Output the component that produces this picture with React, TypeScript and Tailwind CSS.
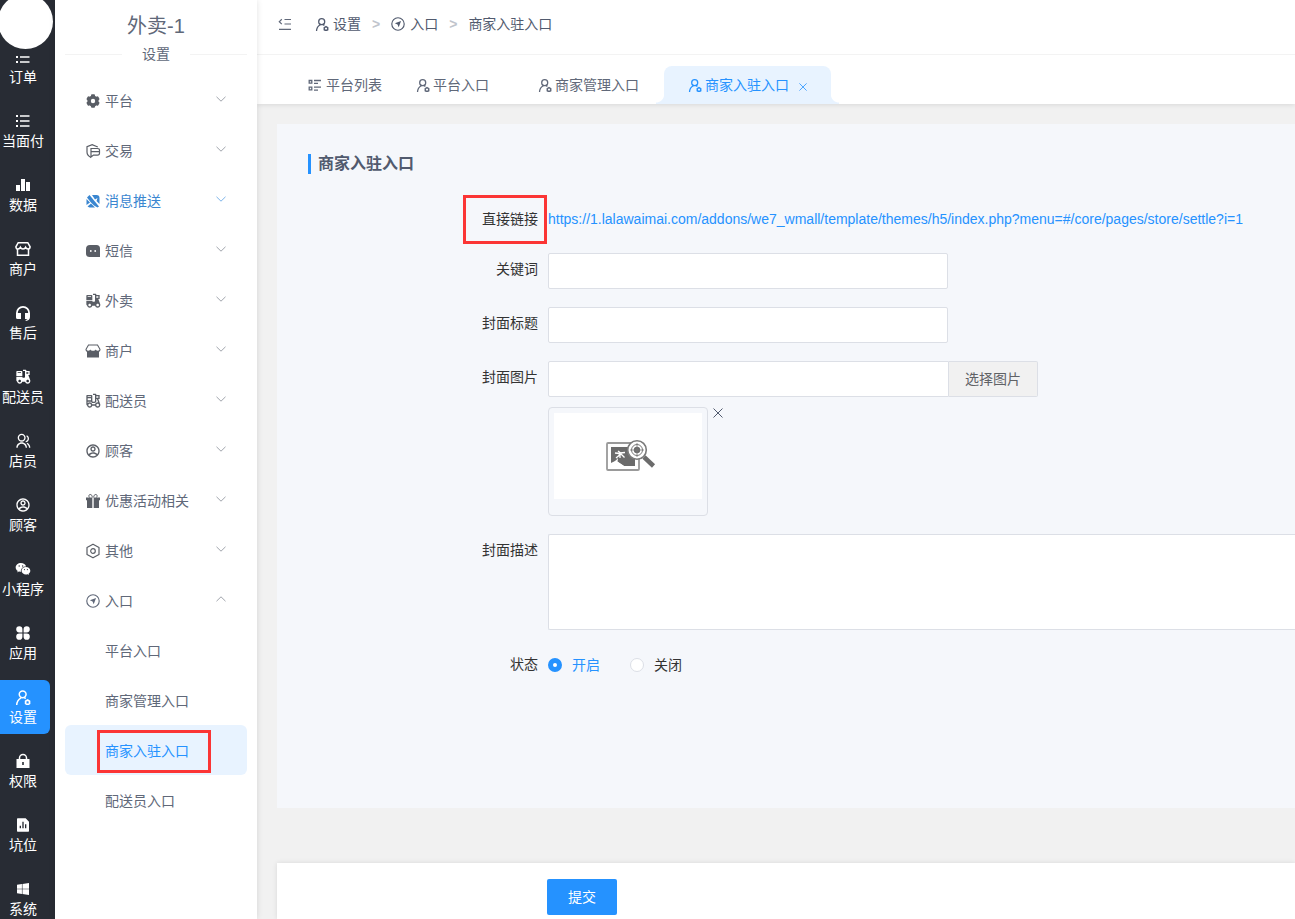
import { useState } from "react";
import type { ReactNode } from "react";
import {
  RiAccountCircleLine,
  RiFileChartFill,
  RiGroupLine,
  RiTakeawayFill,
  RiTakeawayLine,
  RiWechatFill,
  RiWindowsFill,
} from "react-icons/ri";

type IconProps = {
  className?: string;
};

const ListIcon = ({ className }: IconProps) => (
  <svg viewBox="0 0 16 16" className={className} fill="currentColor">
    <path d="M1 2h2v2H1zM5 2.300h9.500v1.500H5zM1 7h2v2H1zM5 7.300h9.500v1.500H5zM1 12h2v2H1zM5 12.300h9.500v1.500H5z" />
  </svg>
);

const BarsIcon = ({ className }: IconProps) => (
  <svg viewBox="0 0 16 16" className={className} fill="currentColor">
    <path d="M1 8h4v6H1zM6 2h4v12H6zM11 5h4v9h-4z" />
  </svg>
);

const ShopIcon = ({ className }: IconProps) => (
  <svg
    viewBox="0 0 16 16"
    className={className}
    fill="none"
    stroke="currentColor"
    strokeWidth="1.500"
  >
    <path d="M3.200 1.700h9.600l2.300 4.100c0 1.300-.8 2.200-2 2.200S11 7.400 10.600 6.400C10.200 7.400 9.200 8 8 8s-2.200-.6-2.600-1.600C5 7.400 4 8 2.900 8S.9 7.100.9 5.800z" />
    <path d="M2.500 8v6.300h11V8" />
  </svg>
);

const ShopFillIcon = ({ className }: IconProps) => (
  <svg viewBox="0 0 16 16" className={className}>
    <path
      d="M3.500 2h9L15 6.300c0 1.200-.8 2-2 2H3c-1.200 0-2-.8-2-2z"
      fill="none"
      stroke="currentColor"
      strokeWidth="1.100"
    />
    <path
      d="M2 8c1.600 0 2.800-.5 3.300-1.600C5.900 7.500 6.900 8 8 8s2.100-.5 2.700-1.600C11.200 7.500 12.400 8 14 8v6.500H2z"
      fill="currentColor"
    />
  </svg>
);

const HeadsetIcon = ({ className }: IconProps) => (
  <svg viewBox="0 0 16 16" className={className} fill="currentColor">
    <path d="M8 1a7 7 0 0 0-7 7v4.500A1.500 1.500 0 0 0 2.500 14H6V8H2.800a5.200 5.200 0 0 1 10.400 0H10v6h2.500l-.5.600-1.500.4.400 1C13.500 15.600 15 14.300 15 12V8a7 7 0 0 0-7-7z" />
  </svg>
);

const CloverIcon = ({ className }: IconProps) => (
  <svg viewBox="0 0 16 16" className={className} fill="currentColor">
    <path d="M4.300 1.200a3.100 3.100 0 0 1 3.100 3.100v3.100H4.300a3.100 3.100 0 0 1 0-6.200zM11.700 1.200a3.100 3.100 0 0 1 0 6.200H8.600V4.300a3.100 3.100 0 0 1 3.100-3.100zM4.300 8.600h3.100v3.100a3.100 3.100 0 1 1-3.100-3.100zM8.600 8.600h3.100a3.100 3.100 0 1 1-3.100 3.100z" />
  </svg>
);

const LockIcon = ({ className }: IconProps) => (
  <svg viewBox="0 0 16 16" className={className} fill="currentColor">
    <path
      fillRule="evenodd"
      d="M1.500 6h13v9h-13zM7.200 9v3h1.600V9z"
    />
    <path
      d="M4.500 6.500V5a3.500 3.500 0 0 1 7 0v1.500"
      fill="none"
      stroke="currentColor"
      strokeWidth="1.500"
    />
  </svg>
);

const UserCogIcon = ({ className }: IconProps) => (
  <svg
    viewBox="0 0 14 14"
    className={className}
    fill="none"
    stroke="currentColor"
    strokeWidth="1.300"
  >
    <circle cx="6.700" cy="4.700" r="3" />
    <path d="M1.500 14c.1-3 1.400-5 3.800-6.300M8.200 7.600l1.200.8" />
    <path
      d="M11 9.700l1.700 1v2l-1.700 1-1.700-1v-2z"
      strokeWidth="1.500"
    />
  </svg>
);

const EntryIcon = ({ className }: IconProps) => (
  <svg viewBox="0 0 16 16" className={className}>
    <circle
      cx="8"
      cy="8"
      r="7.100"
      fill="none"
      stroke="currentColor"
      strokeWidth="1.300"
    />
    <path d="M11.500 4.500 8.800 11.600 7.500 8.500 4.400 7.200z" fill="currentColor" />
  </svg>
);

const GearIcon = ({ className }: IconProps) => (
  <svg viewBox="0 0 16 16" className={className} fill="currentColor">
    <circle cx="8" cy="8" r="5.600" />
    <rect x="6" y="1.300" width="4" height="13.400" rx="1" />
    <rect
      x="6"
      y="1.300"
      width="4"
      height="13.400"
      rx="1"
      transform="rotate(60 8 8)"
    />
    <rect
      x="6"
      y="1.300"
      width="4"
      height="13.400"
      rx="1"
      transform="rotate(120 8 8)"
    />
    <circle cx="8" cy="8" r="2.200" fill="white" />
  </svg>
);

const NutIcon = ({ className }: IconProps) => (
  <svg
    viewBox="0 0 16 16"
    className={className}
    fill="none"
    stroke="currentColor"
    strokeWidth="1.200"
  >
    <path d="M8 1.200l6 3.400v6.800l-6 3.400-6-3.400V4.600z" strokeLinejoin="round" />
    <circle cx="8" cy="8" r="2.300" />
  </svg>
);

const ShieldIcon = ({ className }: IconProps) => (
  <svg
    viewBox="0 0 16 16"
    className={className}
    fill="none"
    stroke="currentColor"
    strokeWidth="1.200"
  >
    <path d="M12.800 4 7.200 1.700 2 3.700V9c0 2.600 1.500 4.300 4 5.400" />
    <path d="M6 5.500h6.500c1.200 0 2 .7 2 1.800v3c0 1.100-.8 1.800-2 1.800H8.500L6 14zM6 8.700h8.500" />
  </svg>
);

const PushIcon = ({ className }: IconProps) => (
  <svg viewBox="0 0 16 16" className={className}>
    <path
      d="M2 4.500 4.500 2 14 13.500 12.500 14.500 9 12.500 5.500 9z"
      fill="currentColor"
    />
    <path d="M7 2h4.500A3 3 0 0 1 14.500 5v6L11.500 8l1-3-2.500 1.500z" fill="currentColor" />
    <path d="M1.500 6 5 9.500 1.500 12zM2.500 13.500 6 10.500l4 4H4.500z" fill="currentColor" />
  </svg>
);

const SmsIcon = ({ className }: IconProps) => (
  <svg viewBox="0 0 16 16" className={className}>
    <path
      d="M5 2h6.500A3.500 3.500 0 0 1 15 5.500V14H4.500A3.500 3.500 0 0 1 1 10.500V6a4 4 0 0 1 4-4z"
      fill="currentColor"
    />
    <circle cx="5.800" cy="8" r=".9" fill="white" />
    <circle cx="10.200" cy="8" r=".9" fill="white" />
  </svg>
);

const GiftIcon = ({ className }: IconProps) => (
  <svg viewBox="0 0 16 16" className={className} fill="currentColor">
    <path d="M1 4.500h6.300v2.800H1zM8.700 4.500H15v2.800H8.700zM2 7.300h5.300V15H2zM8.700 7.300H14V15H8.700z" />
    <path
      d="M7.300 4.500C7.300 2.500 6.500 1.500 5.200 1.500S3.400 3 4.500 4.500M8.700 4.500c0-2 .8-3 2.100-3S12.600 3 11.500 4.500"
      fill="none"
      stroke="currentColor"
    />
  </svg>
);

const GridListIcon = ({ className }: IconProps) => (
  <svg
    viewBox="0 0 14 14"
    className={className}
    fill="none"
    stroke="currentColor"
    strokeWidth="1.300"
  >
    <path d="M1.200 2.500h2.600v2.600H1.200zM1.200 9.200h2.600v2.600H1.200zM6 2.500h7M6 5.400h4M6 9.200h7M6 12.200h4" />
  </svg>
);

const CollapseIcon = ({ className }: IconProps) => (
  <svg
    viewBox="0 0 14 14"
    className={className}
    fill="none"
    stroke="currentColor"
    strokeWidth="1.200"
  >
    <path d="M6.500 2.500H13M6.500 7H13M1 12.400h12M3.800 2.300 1.300 4.700l2.500 2.400" />
  </svg>
);

const CloseIcon = ({ className }: IconProps) => (
  <svg
    viewBox="0 0 10 10"
    className={className}
    fill="none"
    stroke="currentColor"
  >
    <path d="M.5.500l9 9M9.500.500l-9 9" />
  </svg>
);

const ChevronIcon = ({ className }: IconProps) => (
  <svg
    viewBox="0 0 10 10"
    className={className}
    fill="none"
    stroke="currentColor"
  >
    <path d="M.5 2.800 5 7.200l4.500-4.400" />
  </svg>
);

const PlaceholderPicture = ({ className }: IconProps) => (
  <svg viewBox="0 0 50 34" className={className}>
    <rect
      x="1"
      y="4"
      width="32"
      height="27"
      rx="1"
      fill="white"
      stroke="#9a9a9a"
      strokeWidth="1.800"
    />
    <path d="M5 8h24v19H18l-6-4-7 1z" fill="#6b6b6b" />
    <path
      d="M14 13.500l-1 3-3 2.500M14 14.500l-5-.5M14 14l5-.5M14.500 14.500l4 4M14 14v5M12 12l4 3"
      fill="none"
      stroke="white"
      strokeWidth="1.300"
    />
    <path d="M5 27v-3c2-1 5-2 7-5 0 2-1 3 0 4l6 4z" fill="white" />
    <path d="m38 18 9.500 9" stroke="#6b6b6b" strokeWidth="4.500" />
    <circle
      cx="31"
      cy="11"
      r="9.300"
      fill="white"
      stroke="#7a7a7a"
      strokeWidth="1.600"
    />
    <circle cx="31" cy="11" r="5.500" fill="none" stroke="#7a7a7a" />
    <circle cx="31" cy="11" r="3.200" fill="#6b6b6b" />
    <path d="M31 4v14M24 11h14" stroke="#7a7a7a" strokeWidth=".8" />
  </svg>
);

type NavEntry = {
  label: string;
  Icon: (props: IconProps) => ReactNode;
  hot?: boolean;
};

const railItems: NavEntry[] = [
  { label: "订单", Icon: ListIcon },
  { label: "当面付", Icon: ListIcon },
  { label: "数据", Icon: BarsIcon },
  { label: "商户", Icon: ShopIcon },
  { label: "售后", Icon: HeadsetIcon },
  { label: "配送员", Icon: RiTakeawayFill },
  { label: "店员", Icon: RiGroupLine },
  { label: "顾客", Icon: RiAccountCircleLine },
  { label: "小程序", Icon: RiWechatFill },
  { label: "应用", Icon: CloverIcon },
  { label: "设置", Icon: UserCogIcon },
  { label: "权限", Icon: LockIcon },
  { label: "坑位", Icon: RiFileChartFill },
  { label: "系统", Icon: RiWindowsFill },
];

const menuItems: NavEntry[] = [
  { label: "平台", Icon: GearIcon },
  { label: "交易", Icon: ShieldIcon },
  { label: "消息推送", Icon: PushIcon, hot: true },
  { label: "短信", Icon: SmsIcon },
  { label: "外卖", Icon: RiTakeawayFill },
  { label: "商户", Icon: ShopFillIcon },
  { label: "配送员", Icon: RiTakeawayLine },
  { label: "顾客", Icon: RiAccountCircleLine },
  { label: "优惠活动相关", Icon: GiftIcon },
  { label: "其他", Icon: NutIcon },
];

const entryLinks = ["平台入口", "商家管理入口", "商家入驻入口", "配送员入口"];

const Rail = () => {
  return (
    <nav className="w-[55px] shrink-0 bg-[#282c34] text-white">
      <div className="relative z-10 -mb-[14px] h-[54px] bg-[#282c34]">
        <div className="absolute -left-0.5 -top-1.5 size-[55px] rounded-full bg-white" />
      </div>
      <ul className="flex flex-col gap-2.5">
        {railItems.map(({ label, Icon }) => (
          <li key={label}>
            <a
              href="#"
              className={`flex h-[54px] w-[50px] flex-col items-center rounded-r-md pr-1 pt-[9px] ${
                label === "设置" ? "bg-[#2592ff]" : ""
              }`}
            >
              <Icon className="size-4 shrink-0" />
              <span className="whitespace-nowrap leading-6">{label}</span>
            </a>
          </li>
        ))}
      </ul>
    </nav>
  );
};

const Sidebar = () => {
  return (
    <aside className="z-10 w-[202px] shrink-0 bg-white px-2.5 shadow-[0_0_6px_rgba(0,0,0,0.12)]">
      <h1 className="pt-2.5 text-center text-xl leading-8">外卖-1</h1>
      <div className="flex items-center gap-5 leading-6">
        <span className="h-px flex-1 bg-[#f3f3f3]" />
        <span>设置</span>
        <span className="h-px flex-1 bg-[#f3f3f3]" />
      </div>
      <ul className="pt-[9px]">
        {menuItems.map(({ label, Icon, hot }) => (
          <li key={label}>
            <button
              type="button"
              className={`flex h-[50px] w-full items-center gap-1 pl-5 pr-[21px] pt-0.5 ${
                hot ? "text-[#3a86d0]" : ""
              }`}
            >
              <Icon className={`size-4 ${hot ? "" : "text-[#5a5e66]"}`} />
              <span>{label}</span>
              <ChevronIcon
                className={`mb-1 ml-auto size-2.5 ${
                  hot ? "text-[#7cb4ea]" : "text-[#a0a4ac]"
                }`}
              />
            </button>
          </li>
        ))}
        <li>
          <button
            type="button"
            className="flex h-[50px] w-full items-center gap-[5px] pl-[21px] pr-[21px] pt-0.5"
          >
            <EntryIcon className="size-[14px]" />
            <span>入口</span>
            <ChevronIcon className="mb-1 ml-auto size-2.5 rotate-180 text-[#a0a4ac]" />
          </button>
          <ul>
            {entryLinks.map((link) => (
              <li key={link}>
                <a
                  href="#"
                  className={`relative flex h-[50px] items-center rounded-md pl-10 pt-0.5 ${
                    link === "商家入驻入口" ? "bg-[#e8f3ff] text-[#2592ff]" : ""
                  }`}
                >
                  {link}
                  {link === "商家入驻入口" && (
                    <span className="absolute left-8 top-[5px] h-[43px] w-[114px] border-3 border-[#fb3535]" />
                  )}
                </a>
              </li>
            ))}
          </ul>
        </li>
      </ul>
    </aside>
  );
};

const TopBar = () => {
  return (
    <header className="z-[5] bg-white shadow-[0_1px_5px_rgba(0,0,0,0.1)]">
      <div className="flex h-[55px] items-center gap-[23px] border-b border-[#f3f3f3] pb-1.5 pl-[21px]">
        <button type="button" aria-label="收起菜单">
          <CollapseIcon className="size-[14px]" />
        </button>
        <nav className="flex items-center gap-[11px] text-[#515a6e]">
          <a href="#" className="flex items-center gap-1">
            <UserCogIcon className="size-[14px]" />
            设置
          </a>
          <span className="font-bold text-[#c0c4cc]">&gt;</span>
          <a href="#" className="flex items-center gap-[5px]">
            <EntryIcon className="size-[14px]" />
            入口
          </a>
          <span className="font-bold text-[#c0c4cc]">&gt;</span>
          <span>商家入驻入口</span>
        </nav>
      </div>
      <nav className="flex h-[49px] items-end gap-px pl-[51px]">
        <a href="#" className="flex h-[38px] items-center gap-1 pr-[9px]">
          <GridListIcon className="size-[14px]" />
          平台列表
        </a>
        <a href="#" className="flex h-[38px] items-center gap-[3px] px-6">
          <UserCogIcon className="size-[14px]" />
          平台入口
        </a>
        <a href="#" className="flex h-[38px] items-center gap-[3px] px-6">
          <UserCogIcon className="size-[14px]" />
          商家管理入口
        </a>
        <div className="relative flex h-[38px] items-center rounded-t-lg bg-[#e8f3ff] px-6 text-[#2592ff]">
          <svg
            viewBox="0 0 8 8"
            className="absolute -left-2 bottom-0 size-2 text-[#e8f3ff]"
            fill="currentColor"
          >
            <path d="M8 0v8H0v-1.500C4 6.500 7 4 8 0z" />
          </svg>
          <a href="#" className="flex items-center gap-[3px]">
            <UserCogIcon className="size-[14px]" />
            商家入驻入口
          </a>
          <button type="button" aria-label="关闭标签" className="pl-2.5 pt-1">
            <CloseIcon className="size-2" />
          </button>
          <svg
            viewBox="0 0 8 8"
            className="absolute -right-2 bottom-0 size-2 text-[#e8f3ff]"
            fill="currentColor"
          >
            <path d="M0 0v8h8v-1.500C4 6.500 1 4 0 0z" />
          </svg>
        </div>
      </nav>
    </header>
  );
};

type FieldProps = {
  label: string;
  htmlFor?: string;
  children: ReactNode;
};

const Field = ({ label, htmlFor, children }: FieldProps) => (
  <div className="flex gap-2.5 text-[#333]">
    <label htmlFor={htmlFor} className="w-[230px] shrink-0 text-right leading-8">
      {label}
    </label>
    <div className="min-w-0 flex-1">{children}</div>
  </div>
);

const EntryForm = () => {
  const [status, setStatus] = useState("开启");

  return (
    <form className="flex flex-1 flex-col pl-5 pt-5">
      <section className="bg-[#f5f7fb] pb-32 pl-[31px] pt-[30px]">
        <h2 className="mb-[29px] border-l-3 border-[#2592ff] pl-[7px] text-base font-bold leading-5 text-[#515a6e]">
          商家入驻入口
        </h2>
        <div className="flex flex-col gap-[18px]">
          <div className="relative flex gap-2.5 text-[#333]">
            <span className="w-[230px] shrink-0 text-right leading-8">
              直接链接
            </span>
            <a
              href="#"
              className="whitespace-nowrap leading-8 text-[#2592ff]"
            >
              https://1.lalawaimai.com/addons/we7_wmall/template/themes/h5/index.php?menu=#/core/pages/store/settle?i=1
            </a>
            <span className="absolute -top-2 left-[155px] h-[49px] w-[84px] border-3 border-[#fb3535]" />
          </div>
          <Field label="关键词" htmlFor="keyword">
            <input
              id="keyword"
              type="text"
              className="block h-9 w-[400px] rounded-xs border border-[#dcdfe6] bg-white px-3"
            />
          </Field>
          <Field label="封面标题" htmlFor="title">
            <input
              id="title"
              type="text"
              className="block h-9 w-[400px] rounded-xs border border-[#dcdfe6] bg-white px-3"
            />
          </Field>
          <Field label="封面图片" htmlFor="cover">
            <div className="flex">
              <input
                id="cover"
                type="text"
                className="block h-9 w-[401px] rounded-l-xs border border-[#dcdfe6] bg-white px-3"
              />
              <button
                type="button"
                className="h-9 w-[89px] rounded-r-xs border border-l-0 border-[#dcdfe6] bg-[#f1f1f1] text-[#606266]"
              >
                选择图片
              </button>
            </div>
            <div className="mt-2.5 flex items-start gap-[5px]">
              <div className="h-[109px] w-40 rounded border border-[#dcdfe6] p-[5px]">
                <div className="flex h-[86px] items-center justify-center bg-white">
                  <PlaceholderPicture className="ml-1.5 h-[34px] w-[50px]" />
                </div>
              </div>
              <button type="button" aria-label="删除图片" className="pt-px">
                <CloseIcon className="size-2.5 text-[#515a6e]" />
              </button>
            </div>
          </Field>
          <Field label="封面描述" htmlFor="description">
            <textarea
              id="description"
              className="block h-24 w-full resize-none rounded-l-xs border border-r-0 border-[#dcdfe6] bg-white px-3 py-2"
            />
          </Field>
          <fieldset className="flex gap-2.5 text-[#333]">
            <legend className="float-left w-[230px] text-right leading-8">
              状态
            </legend>
            <div className="flex h-8 items-center gap-[30px] pt-0.5">
              {["开启", "关闭"].map((option) => (
                <label
                  key={option}
                  className={`flex items-center gap-2.5 ${
                    status === option ? "text-[#2592ff]" : ""
                  }`}
                >
                  <input
                    type="radio"
                    name="status"
                    value={option}
                    checked={status === option}
                    onChange={() => setStatus(option)}
                    className="size-[14px] appearance-none rounded-full border border-[#dcdfe6] bg-white checked:border-5 checked:border-[#2592ff]"
                  />
                  {option}
                </label>
              ))}
            </div>
          </fieldset>
        </div>
      </section>
      <footer className="mt-[55px] flex-1 bg-white pl-[270px] pt-4 shadow-[0_0_5px_rgba(0,0,0,0.1)]">
        <button
          type="button"
          className="h-9 w-[70px] rounded-xs bg-[#2592ff] text-white"
        >
          提交
        </button>
      </footer>
    </form>
  );
};

export default function App() {
  return (
    <div className="flex h-screen overflow-hidden bg-[#f1f1f1] font-['Liberation_Sans','Noto_Sans_CJK_SC',sans-serif] text-sm text-[#606879]">
      <Rail />
      <Sidebar />
      <main className="flex min-w-0 flex-1 flex-col">
        <TopBar />
        <EntryForm />
      </main>
    </div>
  );
}
